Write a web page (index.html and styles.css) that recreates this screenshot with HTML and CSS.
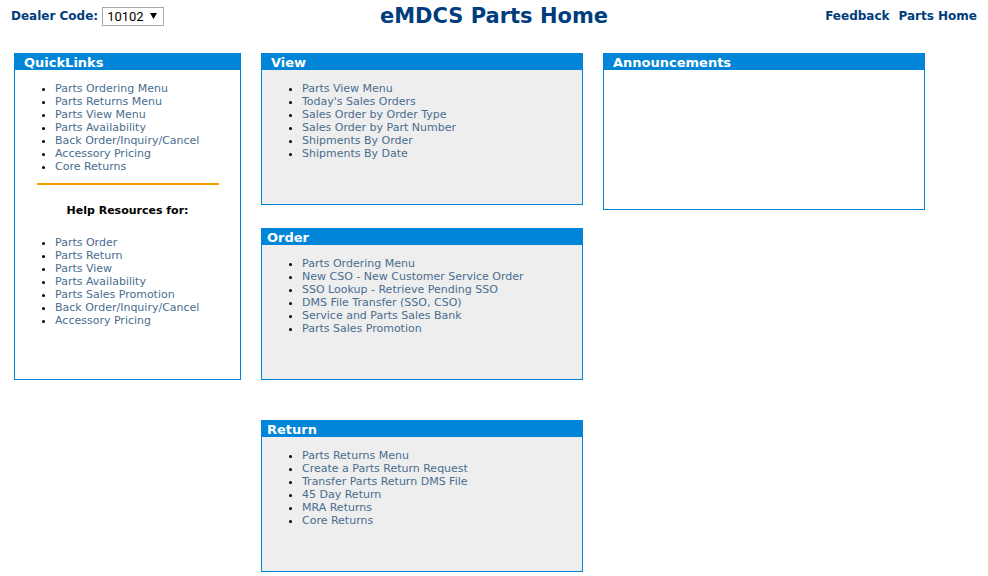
FILE: index.html
```html
<!DOCTYPE html>
<html lang="en">
<head>
<meta charset="utf-8">
<title>eMDCS Parts Home</title>
<link rel="stylesheet" href="styles.css">
</head>
<body>
<header class="topbar">
  <form class="dealer">
    <label for="dealer-code">Dealer Code:</label>
    <span class="select-box">
      <select id="dealer-code"><option>10102</option></select>
      <svg class="arrow" viewBox="0 0 7 6" aria-hidden="true"><path d="M0 0h7L3.500 6z"/></svg>
    </span>
  </form>
  <h1 class="title">eMDCS Parts Home</h1>
  <nav class="top-links">
    <a href="#">Feedback</a>
    <a href="#">Parts Home</a>
  </nav>
</header>
<main class="board">
  <section class="panel quick">
    <h2 class="panel-title indented">QuickLinks</h2>
    <ul class="links">
      <li><a href="#">Parts Ordering Menu</a></li>
      <li><a href="#">Parts Returns Menu</a></li>
      <li><a href="#">Parts View Menu</a></li>
      <li><a href="#">Parts Availability</a></li>
      <li><a href="#">Back Order/Inquiry/Cancel</a></li>
      <li><a href="#">Accessory Pricing</a></li>
      <li><a href="#">Core Returns</a></li>
    </ul>
    <hr class="rule">
    <h3 class="help-title">Help Resources for:</h3>
    <ul class="links">
      <li><a href="#">Parts Order</a></li>
      <li><a href="#">Parts Return</a></li>
      <li><a href="#">Parts View</a></li>
      <li><a href="#">Parts Availability</a></li>
      <li><a href="#">Parts Sales Promotion</a></li>
      <li><a href="#">Back Order/Inquiry/Cancel</a></li>
      <li><a href="#">Accessory Pricing</a></li>
    </ul>
  </section>
  <div class="stack">
    <section class="panel shaded">
      <h2 class="panel-title indented">View</h2>
      <ul class="links">
        <li><a href="#">Parts View Menu</a></li>
        <li><a href="#">Today's Sales Orders</a></li>
        <li><a href="#">Sales Order by Order Type</a></li>
        <li><a href="#">Sales Order by Part Number</a></li>
        <li><a href="#">Shipments By Order</a></li>
        <li><a href="#">Shipments By Date</a></li>
      </ul>
    </section>
    <section class="panel shaded">
      <h2 class="panel-title">Order</h2>
      <ul class="links">
        <li><a href="#">Parts Ordering Menu</a></li>
        <li><a href="#">New CSO - New Customer Service Order</a></li>
        <li><a href="#">SSO Lookup - Retrieve Pending SSO</a></li>
        <li><a href="#">DMS File Transfer (SSO, CSO)</a></li>
        <li><a href="#">Service and Parts Sales Bank</a></li>
        <li><a href="#">Parts Sales Promotion</a></li>
      </ul>
    </section>
    <section class="panel shaded last">
      <h2 class="panel-title">Return</h2>
      <ul class="links">
        <li><a href="#">Parts Returns Menu</a></li>
        <li><a href="#">Create a Parts Return Request</a></li>
        <li><a href="#">Transfer Parts Return DMS File</a></li>
        <li><a href="#">45 Day Return</a></li>
        <li><a href="#">MRA Returns</a></li>
        <li><a href="#">Core Returns</a></li>
      </ul>
    </section>
  </div>
  <section class="panel news">
    <h2 class="panel-title indented">Announcements</h2>
  </section>
</main>
</body>
</html>
```
FILE: styles.css
```css
* { box-sizing: border-box; }

body {
  margin: 0;
  background: #fff;
  color: #000;
  font: 11px/13px "DejaVu Sans", Verdana, sans-serif;
}

a { color: #496d8f; text-decoration: none; }

.topbar {
  display: grid;
  grid-template-columns: 1fr auto 1fr;
  align-items: center;
  height: 32px;
  padding: 0 11px;
  color: #003d7d;
  font-size: 12px;
  font-weight: bold;
}

.dealer { display: flex; align-items: center; gap: 4px; }

.select-box { position: relative; display: inline-flex; }

.select-box select {
  appearance: none;
  width: 62px;
  height: 19px;
  margin: 0;
  padding: 0 4px;
  border: 1px solid #a9a9a9;
  border-radius: 0;
  background: #fff;
  color: #000;
  font: 13px/17px Roboto, "Liberation Sans", sans-serif;
}

.arrow {
  position: absolute;
  top: 6px;
  right: 7px;
  width: 7px;
  height: 6px;
  pointer-events: none;
}

.title { margin: 0; font-size: 21px; line-height: 26px; }

.top-links { display: flex; justify-content: flex-end; gap: 9px; }
.top-links a { color: inherit; }

.board {
  display: grid;
  grid-template-columns: 227fr 322fr 322fr;
  gap: 20px;
  align-items: start;
  padding: 21px 63px 4px 14px;
}

.panel { min-height: 152px; border: 1px solid #0085d8; }
.shaded { background: #eee; }
.quick { min-height: 327px; }
.news { min-height: 157px; }

.stack { display: flex; flex-direction: column; gap: 23px; }
.last { margin-top: 17px; }

.panel-title {
  margin: 0;
  padding: 2px 5px 0;
  background: #0085d8;
  color: #fff;
  font-size: 13px;
  line-height: 14px;
}
.indented { padding-left: 9px; }

.links { margin: 12px 0 0; padding: 0 0 0 40px; }

.rule {
  height: 2px;
  margin: 10px 21px 0 22px;
  border: 0;
  background: #f90;
}

.help-title {
  margin: 19px 0;
  font-size: 11px;
  line-height: 13px;
  text-align: center;
}
```
